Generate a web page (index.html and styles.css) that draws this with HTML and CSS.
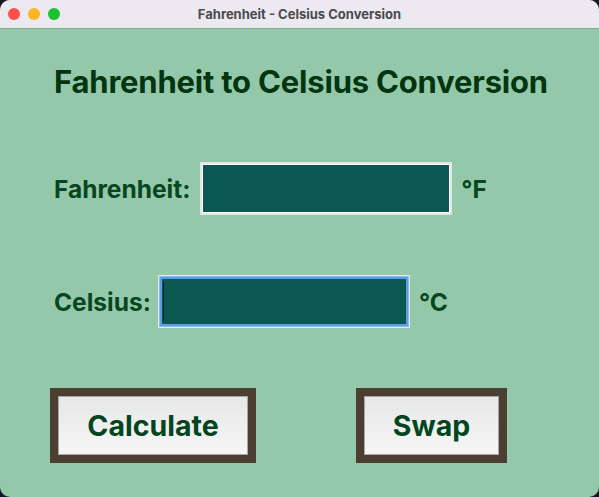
FILE: index.html
```html
<!DOCTYPE html>
<html>
<head>
<meta charset="utf-8">
<link rel="stylesheet" href="styles.css">
</head>
<body>
<div class="window">
  <div class="titlebar">
    <div class="lights">
      <span class="light red"></span>
      <span class="light yellow"></span>
      <span class="light green"></span>
    </div>
    <div class="title">Fahrenheit - Celsius Conversion</div>
  </div>
  <div class="content">
    <h1 class="heading">Fahrenheit to Celsius Conversion</h1>
    <div class="row row-f">
      <span class="label">Fahrenheit:</span>
      <div class="entry entry-f"></div>
      <span class="unit">°F</span>
    </div>
    <div class="row row-c">
      <span class="label">Celsius:</span>
      <div class="entry entry-c"><span class="cursor"></span></div>
      <span class="unit">°C</span>
    </div>
    <div class="buttons">
      <div class="btn btn-calc"><div class="btn-face">Calculate</div></div>
      <div class="btn btn-swap"><div class="btn-face">Swap</div></div>
    </div>
  </div>
</div>
</body>
</html>
```

FILE: styles.css
```css
html, body {
  margin: 0;
  padding: 0;
  background: #1d1426;
}
body {
  width: 599px;
  height: 497px;
  overflow: hidden;
  font-family: Inter, "Noto Sans", sans-serif;
}
.window {
  width: 599px;
  height: 497px;
  border-radius: 10px;
  overflow: hidden;
  background: #93c9aa;
  display: flex;
  flex-direction: column;
}
.titlebar {
  height: 28px;
  background: #ece9f0;
  border-bottom: 1px solid #7cad90;
  position: relative;
  display: flex;
  align-items: center;
  justify-content: center;
  flex-shrink: 0;
}
.lights {
  position: absolute;
  left: 8px;
  top: 8px;
  display: flex;
  gap: 8px;
}
.light {
  width: 12px;
  height: 12px;
  border-radius: 50%;
  display: block;
}
.red { background: #fe4f4c; }
.yellow { background: #fdb526; }
.green { background: #19c332; }
.title {
  font-size: 13px;
  font-weight: 700;
  color: #4a4a4e;
  letter-spacing: 0;
}
.content {
  padding-left: 54px;
  display: flex;
  flex-direction: column;
}
.heading {
  margin: 34px 0 0 0;
  font-size: 31px;
  line-height: 38px;
  font-weight: 700;
  color: #023510;
  letter-spacing: -0.2px;
}
.row {
  display: flex;
  align-items: center;
  height: 53px;
}
.row-f { margin-top: 61px; }
.row-c { margin-top: 60px; }
.label, .unit {
  font-size: 24.5px;
  font-weight: 700;
  color: #074620;
}
.entry {
  width: 252px;
  height: 53px;
  box-sizing: border-box;
  background: #0b5853;
  position: relative;
}
.entry-f {
  margin-left: 10px;
  border: 2px solid #e6e6e6;
  box-shadow: inset 0 0 0 1px #ffffff;
}
.entry-c {
  margin-left: 7px;
  border: 1px solid #eaeae2;
  box-shadow: inset 0 0 0 1px #86bdf2, inset 0 0 0 3px #5d9ce6;
}
.cursor {
  position: absolute;
  left: 4px;
  top: 6px;
  width: 1px;
  height: 39px;
  background: #07201e;
}
.unit { margin-left: 9px; }
.buttons {
  display: flex;
  margin-top: 60px;
  margin-left: -4px;
  gap: 100px;
}
.btn {
  height: 75px;
  box-sizing: border-box;
  border: 8px solid #4a3f30;
}
.btn-calc { width: 206px; }
.btn-swap { width: 151px; }
.btn-face {
  height: 100%;
  box-sizing: border-box;
  border: 1px solid #a7a7a7;
  background: linear-gradient(#e7e7e7, #f6f6f6);
  display: flex;
  align-items: center;
  justify-content: center;
  font-size: 28.5px;
  font-weight: 700;
  color: #02451f;
}
```
